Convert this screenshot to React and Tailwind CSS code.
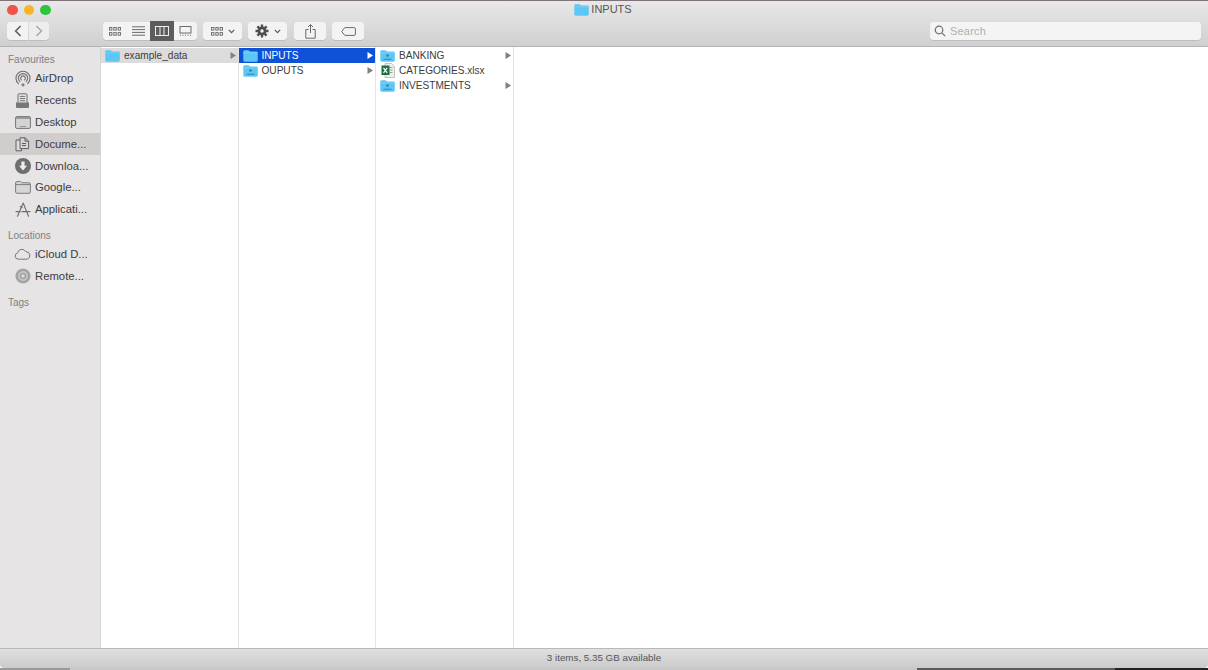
import React from "react";

const font = { fontFamily: '"Liberation Sans", Arial, sans-serif' };

function Folder({ size = 15, plain = false, color = "#5cc6f5" }) {
  return (
    <svg width={size} height={Math.round(size * 0.82)} viewBox="1 1 18 15" className="shrink-0">
      <path d="M1 3.2C1 2 1.7 1.3 2.8 1.3h4.4c.7 0 1 .3 1.4.8l.7.8h8c1.2 0 1.8.7 1.8 1.8v9.2c0 1-.7 1.7-1.8 1.7H2.8C1.7 15.6 1 14.9 1 13.9z" fill={color} />
      <path d="M1 4.6h18" stroke="#8fd8f7" strokeWidth="0.8" />
      {!plain && (
        <g>
          <circle cx="10" cy="8" r="1.7" fill="#2f86b0" />
          <path d="M5.5 12.6h9" stroke="#2f86b0" strokeWidth="1.3" strokeLinecap="round" />
        </g>
      )}
    </svg>
  );
}

function Excel() {
  return (
    <svg width="14" height="15" viewBox="0 0 14 15" className="shrink-0">
      <path d="M4 .5h6.5L13.5 3.5v11H4z" fill="#eef0ee" stroke="#a9aeaa" strokeWidth="0.7" />
      <path d="M8.5 4.5h3M8.5 7h3M8.5 9.5h3" stroke="#8a9a90" strokeWidth="0.9" />
      <rect x="0.5" y="2.5" width="8" height="9.5" fill="#1d6f42" />
      <path d="M2.5 4.8l3.7 5M6.2 4.8l-3.7 5" stroke="#ffffff" strokeWidth="1.2" />
    </svg>
  );
}

function Arrow({ active }) {
  return (
    <svg width="6" height="7" viewBox="0 0 6 7" className="shrink-0">
      <path d="M0.5 0L6 3.5 0.5 7z" fill={active ? "#ffffff" : "#808080"} />
    </svg>
  );
}

const stroke = { fill: "none", stroke: "#6f6f6f", strokeWidth: 1.3, strokeLinecap: "round", strokeLinejoin: "round" };

const sidebarIcons = {
  airdrop: (
    <svg width="16" height="17" viewBox="0 0 16 17">
      <g {...stroke} strokeWidth="1.1">
        <path d="M3.4 13.6a7 7 0 1 1 9.2 0" />
        <path d="M4.9 11.6a4.6 4.6 0 1 1 6.2 0" />
        <path d="M6.4 9.8a2.3 2.3 0 1 1 3.2 0" />
      </g>
      <circle cx="8" cy="14.8" r="1.6" fill="#808080" />
    </svg>
  ),
  recents: (
    <svg width="15" height="16" viewBox="0 0 15 16">
      <rect x="3" y="0.8" width="9" height="10" rx="1" fill="#e6e6e6" stroke="#6f6f6f" />
      <path d="M4.8 3.4h5.4M4.8 5.6h5.4M4.8 7.8h5.4" stroke="#6f6f6f" />
      <path d="M1 9.5h13v4.2c0 .8-.6 1.4-1.4 1.4H2.4c-.8 0-1.4-.6-1.4-1.4z" fill="#777777" />
    </svg>
  ),
  desktop: (
    <svg width="16" height="13" viewBox="0 0 16 13">
      <rect x="0.6" y="0.6" width="14.8" height="11.8" rx="1.2" fill="#d4d4d4" stroke="#757575" />
      <path d="M1 2h14" stroke="#757575" strokeWidth="1.2" />
      <path d="M5.5 10.5h1M7.5 10.5h1M9.5 10.5h1" stroke="#555555" />
    </svg>
  ),
  documents: (
    <svg width="15" height="15" viewBox="0 0 15 15">
      <path d="M1 3h5.5v10.8H1z" fill="#e0dcdc" stroke="#5f5f5f" />
      <path d="M5 .8h5l3.6 3.4v7.4H5z" fill="#d8d4d4" stroke="#5f5f5f" />
      <path d="M10 .8v3.4h3.6M7 6.5h4M7 8.5h4" stroke="#5f5f5f" fill="none" />
    </svg>
  ),
  downloads: (
    <svg width="16" height="16" viewBox="0 0 16 16">
      <circle cx="8" cy="8" r="8" fill="#6e6e6e" />
      <path d="M6.4 3.4h3.2v4.4h2.4L8 12.4 4 7.8h2.4z" fill="#eeeeee" />
    </svg>
  ),
  google: (
    <svg width="16" height="13" viewBox="0 0 16 13">
      <path d="M.6 2c0-.8.5-1.4 1.3-1.4h3.4c.5 0 .8.2 1.1.6l.5.6h7.2c.8 0 1.3.6 1.3 1.4v7.7c0 .8-.5 1.4-1.3 1.4H1.9c-.8 0-1.3-.6-1.3-1.4z" fill="#d6d6d6" stroke="#7d7d7d" />
      <path d="M1 3.6h14" stroke="#7d7d7d" />
    </svg>
  ),
  apps: (
    <svg width="16" height="15" viewBox="0 0 16 15">
      <g {...stroke} strokeWidth="1.1">
        <path d="M2.5 14.2L8.2 1l5.3 13.2" />
        <path d="M1 9.6h4.2M7 9.6h8" />
        <path d="M5.2 4.6l2 1" />
      </g>
    </svg>
  ),
  cloud: (
    <svg width="17" height="12" viewBox="0 0 17 12">
      <path d="M4.2 11.2A3.2 3.2 0 0 1 3.6 4.9 4.4 4.4 0 0 1 11.8 3.6a3.9 3.9 0 0 1 1.4 7.6z" fill="none" stroke="#777777" strokeWidth="1" />
    </svg>
  ),
  remote: (
    <svg width="16" height="16" viewBox="0 0 16 16">
      <circle cx="8" cy="8" r="7.6" fill="#a6a6a6" />
      <circle cx="8" cy="8" r="5.4" fill="#c8c8c8" stroke="#8e8e8e" strokeWidth="0.6" />
      <circle cx="8" cy="8" r="3" fill="#b4b4b4" stroke="#8e8e8e" strokeWidth="0.6" />
      <circle cx="8" cy="8" r="1.2" fill="#e4e4e4" />
    </svg>
  ),
};

function SidebarHeading({ children, className = "" }) {
  return <div className={`pl-2 text-[10px] leading-3 text-[#808080] ${className}`}>{children}</div>;
}

function SidebarItem({ icon, label, active }) {
  return (
    <div className={`flex h-[21.8px] items-center ${active ? "bg-[#d2cdcd]" : ""}`}>
      <span className="flex w-[35px] shrink-0 items-center justify-center pl-[10px]">{sidebarIcons[icon]}</span>
      <span className="text-[11.3px] text-[#3d3d3d]">{label}</span>
    </div>
  );
}

function Row({ icon, label, arrow = true, state }) {
  const bg = state === "active" ? "bg-[#0f52d8]" : state === "parent" ? "bg-[#dcdcdc]" : "";
  const text = state === "active" ? "text-white" : "text-[#3c3c3c]";
  return (
    <div className={`flex h-[15px] items-center pl-[4px] pr-[2px] ${bg}`}>
      <span className="flex w-[15px] shrink-0 justify-center">{icon}</span>
      <span className={`ml-[4px] flex-1 text-[10.1px] leading-[15px] ${text}`}>{label}</span>
      {arrow && <Arrow active={state === "active"} />}
    </div>
  );
}

function Seg({ children, className = "", w = "w-[23.5px]" }) {
  return <div className={`flex items-center justify-center ${w} ${className}`}>{children}</div>;
}

function Group({ children, className = "" }) {
  return <div className={`flex h-[18px] rounded-[3px] bg-[#f3f3f3] shadow-[0_0.5px_0.5px_rgba(0,0,0,0.2)] ${className}`}>{children}</div>;
}

function Chevron() {
  return (
    <svg width="7" height="5" viewBox="0 0 7 5">
      <path d="M.8.8L3.5 3.6 6.2.8" fill="none" stroke="#5a5a5a" strokeWidth="1.2" />
    </svg>
  );
}

function IconGrid() {
  return (
    <svg width="12" height="9" viewBox="0 0 12 9" fill="none" stroke="#666666" strokeWidth="0.9">
      <rect x=".5" y=".5" width="2.4" height="2.6" /><rect x="4.8" y=".5" width="2.4" height="2.6" /><rect x="9.1" y=".5" width="2.4" height="2.6" />
      <rect x=".5" y="5.6" width="2.4" height="2.6" /><rect x="4.8" y="5.6" width="2.4" height="2.6" /><rect x="9.1" y="5.6" width="2.4" height="2.6" />
    </svg>
  );
}

export default function App() {
  return (
    <div className="flex h-[670px] w-[1208px] flex-col overflow-hidden bg-white" style={font}>
      <div className="h-px shrink-0 bg-[#7d7378]" />

      {/* Toolbar */}
      <div className="h-[46px] shrink-0 border-b border-[#b4b4b4] bg-gradient-to-b from-[#e8e8e8] to-[#d0d0d0]">
        <div className="relative flex h-[18px] items-center pl-[7px]">
          <div className="flex gap-[6px]">
            <span className="h-[10.5px] w-[10.5px] rounded-full bg-[#f0524a]" />
            <span className="h-[10.5px] w-[10.5px] rounded-full bg-[#f7b52d]" />
            <span className="h-[10.5px] w-[10.5px] rounded-full bg-[#2ec440]" />
          </div>
          <div className="absolute inset-x-0 top-px flex items-center justify-center gap-[2px] pr-[2px]">
            <Folder size={15} plain />
            <span className="text-[11px] leading-[15px] text-[#555555]">INPUTS</span>
          </div>
        </div>

        <div className="mt-[2px] flex h-[20px] items-center pl-[7px] pr-[7px]">
          <div className="flex h-[18px] gap-px">
            <Seg w="w-[21px]" className="rounded-l-[3px] bg-[#f3f3f3] shadow-[0_0.5px_0.5px_rgba(0,0,0,0.2)]">
              <svg width="8" height="12" viewBox="0 0 8 12"><path d="M6.6 1L1.6 6l5 5" fill="none" stroke="#5b5b5b" strokeWidth="1.5" /></svg>
            </Seg>
            <Seg w="w-[20px]" className="rounded-r-[3px] bg-[#ededed] shadow-[0_0.5px_0.5px_rgba(0,0,0,0.2)]">
              <svg width="8" height="12" viewBox="0 0 8 12"><path d="M1.4 1l5 5-5 5" fill="none" stroke="#a8a8a8" strokeWidth="1.5" /></svg>
            </Seg>
          </div>

          <Group className="ml-[54px]">
            <Seg><IconGrid /></Seg>
            <Seg>
              <svg width="13" height="10" viewBox="0 0 13 10"><path d="M0 .8h13M0 3.6h13M0 6.4h13M0 9.2h13" stroke="#6b6b6b" /></svg>
            </Seg>
            <Seg className="-my-px bg-[#5c5c5c]">
              <svg width="14" height="10" viewBox="0 0 14 10" fill="none" stroke="#eeeeee"><rect x=".5" y=".5" width="13" height="9" /><path d="M5 .5v9M9 .5v9" /></svg>
            </Seg>
            <Seg>
              <svg width="13" height="10" viewBox="0 0 13 10" fill="none" stroke="#6b6b6b"><rect x="1" y=".5" width="11" height="6.5" /><path d="M1 9.2h1M3.5 9.2h1M6 9.2h1M8.5 9.2h1M11 9.2h1" /></svg>
            </Seg>
          </Group>

          <Group className="ml-[6px] w-[39px] items-center justify-center gap-[5px]">
            <IconGrid />
            <Chevron />
          </Group>

          <Group className="ml-[6px] w-[39px] items-center justify-center gap-[5px]">
            <svg width="14" height="14" viewBox="0 0 14 14">
              <g stroke="#4f4f4f" strokeWidth="2.4">
                <path d="M7 .5v13M.5 7h13M2.4 2.4l9.2 9.2M11.6 2.4l-9.2 9.2" />
              </g>
              <circle cx="7" cy="7" r="4.4" fill="#4f4f4f" />
              <circle cx="7" cy="7" r="1.7" fill="#f3f3f3" />
            </svg>
            <Chevron />
          </Group>

          <Group className="ml-[7px] w-[32px] items-center justify-center">
            <svg width="11" height="15" viewBox="0 0 11 15" fill="none" stroke="#6a6a6a" strokeWidth="1">
              <path d="M3.5 5.5H.8v8.7h9.4V5.5H7.5M5.500 9V.8M3 3l2.500-2.400L8 3" />
            </svg>
          </Group>

          <Group className="ml-[6px] w-[32px] items-center justify-center">
            <svg width="15" height="9" viewBox="0 0 15 9" fill="none" stroke="#6a6a6a" strokeWidth="1">
              <path d="M3.8.6h9.4c.7 0 1.2.5 1.2 1.2v5.400c0 .7-.5 1.200-1.200 1.200H3.800L.7 4.500z" />
            </svg>
          </Group>

          <div className="ml-auto flex h-[18px] w-[271px] items-center rounded-[3px] bg-[#f4f4f4] pl-[4px] shadow-[0_0.5px_0.5px_rgba(0,0,0,0.2)]">
            <svg width="12" height="12" viewBox="0 0 12 12" fill="none" stroke="#6f6f6f" strokeWidth="1.2">
              <circle cx="5" cy="5" r="3.8" />
              <path d="M7.8 7.8l3.400 3.400" />
            </svg>
            <span className="ml-[4px] text-[11px] tracking-[0.2px] text-[#b0b0b0]">Search</span>
          </div>
        </div>
      </div>

      {/* Body */}
      <div className="flex min-h-0 flex-1">
        <aside className="w-[101px] shrink-0 border-r border-[#d4d4d4] bg-[#e6e4e4] pt-[7px]">
          <SidebarHeading>Favourites</SidebarHeading>
          <div className="mt-[2px]">
            <SidebarItem icon="airdrop" label="AirDrop" />
            <SidebarItem icon="recents" label="Recents" />
            <SidebarItem icon="desktop" label="Desktop" />
            <SidebarItem icon="documents" label="Docume..." active />
            <SidebarItem icon="downloads" label="Downloa..." />
            <SidebarItem icon="google" label="Google..." />
            <SidebarItem icon="apps" label="Applicati..." />
          </div>
          <SidebarHeading className="mt-[9px]">Locations</SidebarHeading>
          <div className="mt-[2px]">
            <SidebarItem icon="cloud" label="iCloud D..." />
            <SidebarItem icon="remote" label="Remote..." />
          </div>
          <SidebarHeading className="mt-[10px]">Tags</SidebarHeading>
        </aside>

        <div className="w-[137.5px] shrink-0 border-r border-[#e4e4e4] pt-px">
          <Row icon={<Folder plain />} label="example_data" state="parent" />
        </div>
        <div className="w-[137.5px] shrink-0 border-r border-[#e4e4e4] pt-px">
          <Row icon={<Folder plain />} label="INPUTS" state="active" />
          <Row icon={<Folder />} label="OUPUTS" />
        </div>
        <div className="w-[137.5px] shrink-0 border-r border-[#e4e4e4] pt-px">
          <Row icon={<Folder />} label="BANKING" />
          <Row icon={<Excel />} label="CATEGORIES.xlsx" arrow={false} />
          <Row icon={<Folder />} label="INVESTMENTS" />
        </div>
        <div className="flex-1" />
      </div>

      {/* Status bar */}
      <div className="flex h-[20px] shrink-0 items-center justify-center rounded-b-[4px] border-t border-[#b9b9b9] bg-gradient-to-b from-[#e0e0e0] to-[#cbcbcb] text-[9.8px] text-[#555555]">
        3 items, 5.35 GB available
      </div>

      {/* desktop showing below the window */}
      <div className="flex h-[2px] shrink-0">
        <div className="w-[70px] bg-[#9a9a9a]" />
        <div className="w-[847px] bg-[#c8c8c8]" />
        <div className="w-[198px] bg-[#5a5a5a]" />
        <div className="flex-1 bg-[#222222]" />
      </div>
    </div>
  );
}
